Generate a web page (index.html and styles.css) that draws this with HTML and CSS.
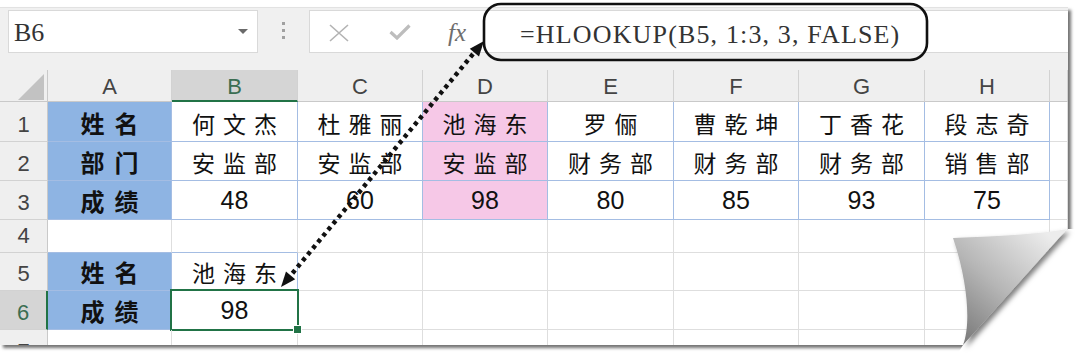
FILE: index.html
```html
<!DOCTYPE html>
<html lang="zh">
<head>
<meta charset="utf-8">
<title>HLOOKUP</title>
<link rel="stylesheet" href="styles.css">
</head>
<body>
<div class="shot">
  <div class="page">
    <div class="toolbar">
      <div class="namebox"><span class="nb-text">B6</span><span class="nb-caret"></span></div>
      <div class="grip"><i></i><i></i><i></i></div>
      <div class="fbar">
        <svg class="ic-x" width="22" height="18" viewBox="0 0 22 18"><path d="M2 1 L20 17 M20 1 L2 17" stroke="#b3b3b3" stroke-width="1.6" fill="none"/></svg>
        <svg class="ic-check" width="22" height="16" viewBox="0 0 22 16"><path d="M1.5 8 L8 14 L20.5 1.5" stroke="#bdbdbd" stroke-width="3.2" fill="none"/></svg>
        <span class="fx">fx</span>
        <span class="formula">=HLOOKUP(B5, 1:3, 3, FALSE)</span>
      </div>
    </div>
    <div class="sheet">
      <!-- header row -->
      <div class="c hd corner"><svg width="26" height="26" viewBox="0 0 26 26"><polygon points="0,26 26,26 26,0" fill="#c2c2c2"/></svg></div>
      <div class="c hd col">A</div>
      <div class="c hd col sel">B</div>
      <div class="c hd col">C</div>
      <div class="c hd col">D</div>
      <div class="c hd col">E</div>
      <div class="c hd col">F</div>
      <div class="c hd col">G</div>
      <div class="c hd col">H</div>
      <div class="c hd col"></div>
      <!-- row 1 -->
      <div class="c hd row">1</div>
      <div class="c t lbl cn">姓名</div>
      <div class="c t cn">何文杰</div>
      <div class="c t cn">杜雅丽</div>
      <div class="c t hl cn">池海东</div>
      <div class="c t cn">罗俪</div>
      <div class="c t cn">曹乾坤</div>
      <div class="c t cn">丁香花</div>
      <div class="c t cn">段志奇</div>
      <div class="c"></div>
      <!-- row 2 -->
      <div class="c hd row">2</div>
      <div class="c t lbl cn">部门</div>
      <div class="c t cn">安监部</div>
      <div class="c t cn">安监部</div>
      <div class="c t hl cn">安监部</div>
      <div class="c t cn">财务部</div>
      <div class="c t cn">财务部</div>
      <div class="c t cn">财务部</div>
      <div class="c t cn">销售部</div>
      <div class="c"></div>
      <!-- row 3 -->
      <div class="c hd row">3</div>
      <div class="c t lbl cn">成绩</div>
      <div class="c t num">48</div>
      <div class="c t num">60</div>
      <div class="c t hl num">98</div>
      <div class="c t num">80</div>
      <div class="c t num">85</div>
      <div class="c t num">93</div>
      <div class="c t num">75</div>
      <div class="c"></div>
      <!-- row 4 -->
      <div class="c hd row">4</div>
      <div class="c bb"></div>
      <div class="c bb"></div>
      <div class="c"></div>
      <div class="c"></div>
      <div class="c"></div>
      <div class="c"></div>
      <div class="c"></div>
      <div class="c"></div>
      <div class="c"></div>
      <!-- row 5 -->
      <div class="c hd row">5</div>
      <div class="c t lbl cn">姓名</div>
      <div class="c t cn">池海东</div>
      <div class="c"></div>
      <div class="c"></div>
      <div class="c"></div>
      <div class="c"></div>
      <div class="c"></div>
      <div class="c"></div>
      <div class="c"></div>
      <!-- row 6 -->
      <div class="c hd row sel">6</div>
      <div class="c t lbl cn">成绩</div>
      <div class="c t num active">98</div>
      <div class="c"></div>
      <div class="c"></div>
      <div class="c"></div>
      <div class="c"></div>
      <div class="c"></div>
      <div class="c"></div>
      <div class="c"></div>
      <!-- row 7 -->
      <div class="c hd row">7</div>
      <div class="c"></div>
      <div class="c"></div>
      <div class="c"></div>
      <div class="c"></div>
      <div class="c"></div>
      <div class="c"></div>
      <div class="c"></div>
      <div class="c"></div>
      <div class="c"></div>
    </div>
  </div>
  <svg class="overlay" width="1080" height="358" viewBox="0 0 1080 358">
    <defs>
      <linearGradient id="curlGrad" gradientUnits="userSpaceOnUse" x1="958" y1="330" x2="1045" y2="232">
        <stop offset="0" stop-color="#7e7e7e"/>
        <stop offset="0.45" stop-color="#b6b6b6"/>
        <stop offset="1" stop-color="#ececec"/>
      </linearGradient>
      <filter id="curlShadow" x="-20%" y="-20%" width="150%" height="150%">
        <feDropShadow dx="3" dy="3" stdDeviation="2.5" flood-color="#000" flood-opacity="0.5"/>
      </filter>
    </defs>
    <polygon points="1068,229 1080,229 1080,358 955,358 963,345" fill="#ffffff"/>
    <path d="M953,238 C990,236 1035,235 1067,229 L963,345 C971,325 968,282 953,238 Z" fill="url(#curlGrad)" filter="url(#curlShadow)"/>
    <rect x="484" y="4" width="443" height="56" rx="17" ry="17" fill="none" stroke="#111" stroke-width="2.6"/>
    <line x1="473" y1="54" x2="291" y2="275" stroke="#111" stroke-width="4.5" stroke-dasharray="4 4"/>
    <polygon points="484,41 479,56.4 469.8,48.8" fill="#111"/>
    <polygon points="281,287 286,271.6 295.2,279.2" fill="#111"/>
  </svg>
</div>
</body>
</html>
```
FILE: styles.css
```css
* {
  box-sizing: border-box;
}

html, body {
  margin: 0;
  padding: 0;
  background: #ffffff;
}

body {
  width: 1080px;
  height: 358px;
  overflow: hidden;
}

.shot {
  position: relative;
  width: 1080px;
  height: 358px;
  padding-top: 7px;
}

.page {
  width: 1068px;
  height: 338px;
  background: #ffffff;
  overflow: hidden;
  box-shadow: 3px 3px 3px rgba(0, 0, 0, 0.55);
}

/* ---------- toolbar ---------- */
.toolbar {
  display: flex;
  align-items: flex-start;
  height: 63px;
  padding: 2px 0 0 8px;
  background: #f0f0f0;
  border-top: 1px solid #e2e2e2;
}

.namebox {
  width: 250px;
  height: 43px;
  background: #ffffff;
  border: 1px solid #d9d9d9;
  display: flex;
  align-items: center;
  justify-content: space-between;
  padding: 3px 9px 0 5px;
}

.nb-text {
  font-family: "Liberation Serif", serif;
  font-size: 26px;
  color: #333333;
  line-height: 1;
}

.nb-caret {
  width: 0;
  height: 0;
  border-left: 5px solid transparent;
  border-right: 5px solid transparent;
  border-top: 5px solid #6a6a6a;
  margin-bottom: 4px;
}

.grip {
  width: 51px;
  display: flex;
  flex-direction: column;
  align-items: center;
  gap: 4px;
  padding-top: 12px;
}

.grip i {
  display: block;
  width: 3px;
  height: 3px;
  background: #a0a0a0;
}

.fbar {
  flex: 1;
  height: 43px;
  background: #ffffff;
  border: 1px solid #d9d9d9;
  border-right: none;
  display: flex;
  align-items: center;
  padding-left: 18px;
}

.ic-x {
  display: block;
  margin-top: 2px;
}

.ic-check {
  display: block;
  margin-left: 39px;
}

.fx {
  margin-left: 37px;
  font-family: "Liberation Serif", serif;
  font-style: italic;
  font-size: 25px;
  color: #6e6e6e;
  line-height: 1;
  margin-top: 1px;
}

.formula {
  margin-left: 54px;
  font-family: "Liberation Serif", serif;
  font-size: 26px;
  letter-spacing: 1.15px;
  color: #333333;
  line-height: 1;
  padding-top: 6px;
  white-space: nowrap;
}

/* ---------- sheet ---------- */
.sheet {
  display: grid;
  grid-template-columns: 48px 124px 126px 125px 125px 126px 125px 126px 125px 18px;
  grid-template-rows: 32px 40px 39px 39px 33px 38px 39px 39px;
}

.c {
  position: relative;
  display: flex;
  justify-content: center;
  align-items: flex-end;
  border-right: 1px solid #dedede;
  border-bottom: 1px solid #dedede;
  color: #000000;
  white-space: nowrap;
}

.hd {
  background: #efefef;
  font-family: "Liberation Sans", Arial, sans-serif;
  font-size: 22px;
  line-height: 1;
  color: #444444;
  border-right-color: #d2d2d2;
  border-bottom-color: #d2d2d2;
}

.hd.col {
  padding-bottom: 3px;
  border-bottom-color: #c9c9c9;
}

.hd.row {
  padding-bottom: 5px;
  border-right-color: #c9c9c9;
}

.corner {
  justify-content: flex-end;
  padding: 0 3px 1px 0;
  border-bottom-color: #c9c9c9;
  border-right-color: #c9c9c9;
}

.corner svg {
  display: block;
}

.hd.sel {
  background: #d5d5d5;
  color: #3b6e52;
}

.hd.col.sel {
  border-bottom: 2px solid #217346;
  padding-bottom: 2px;
}

.hd.row.sel {
  border-right: 2px solid #217346;
}

.t {
  border-right-color: #a4bde3;
  border-bottom-color: #a4bde3;
}

.bb {
  border-bottom-color: #a4bde3;
}

.lbl {
  background: #8eb4e3;
  font-weight: 700;
}

.hl {
  background: #f6c8e7;
}

.cn {
  font-family: "Noto Sans CJK SC", sans-serif;
  font-size: 23px;
  line-height: 1;
  letter-spacing: 8px;
  text-indent: 8px;
  padding-bottom: 6px;
  color: #111111;
}

.lbl.cn {
  font-size: 24px;
  letter-spacing: 10px;
  text-indent: 10px;
}

.num {
  font-family: "Liberation Sans", Arial, sans-serif;
  font-size: 25px;
  line-height: 1;
  padding-bottom: 6px;
  color: #111111;
}

.active::after {
  content: "";
  position: absolute;
  left: -2px;
  top: -2px;
  right: -2px;
  bottom: -2px;
  border: 2px solid #217346;
}

.active::before {
  content: "";
  position: absolute;
  right: -5px;
  bottom: -5px;
  width: 7px;
  height: 7px;
  background: #217346;
  border: 1px solid #ffffff;
  z-index: 2;
}

/* ---------- overlay ---------- */
.overlay {
  position: absolute;
  left: 0;
  top: 0;
  pointer-events: none;
}
```
